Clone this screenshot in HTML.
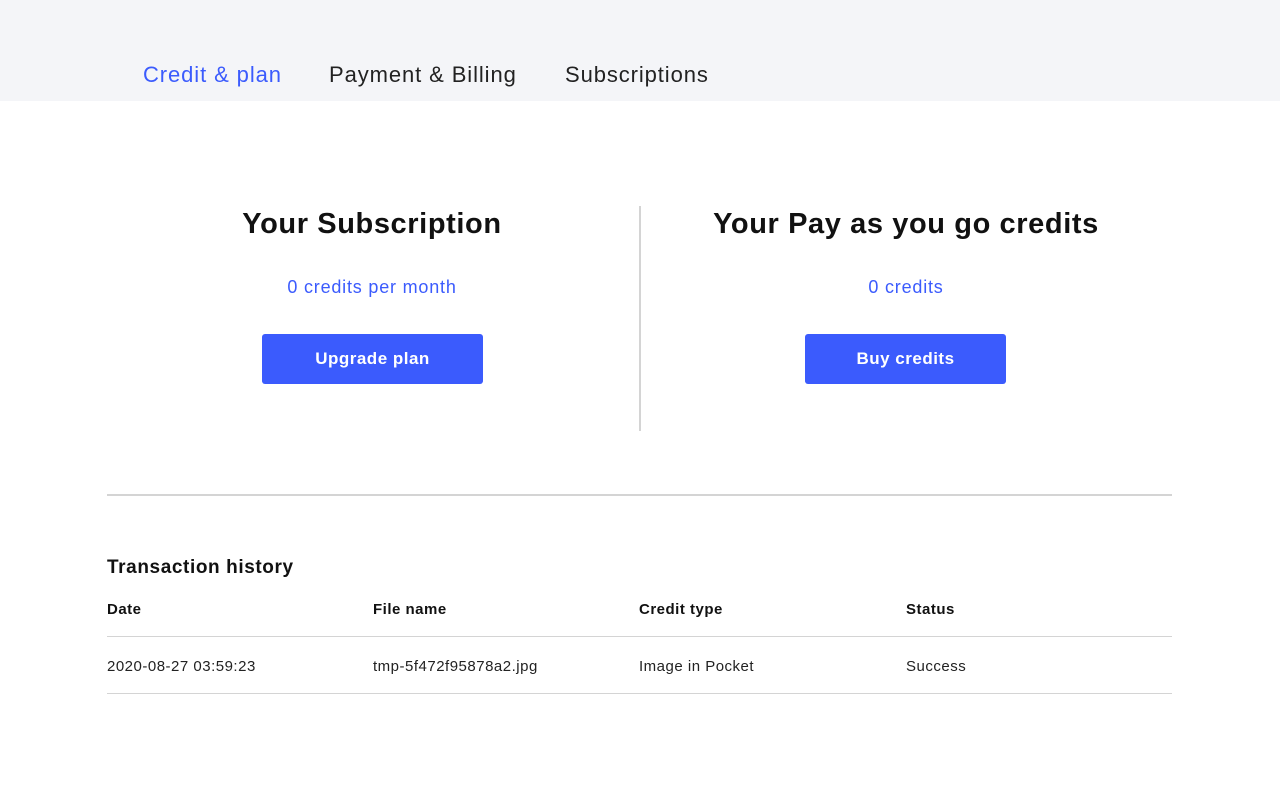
<!DOCTYPE html>
<html><head><meta charset="utf-8"><style>
*{margin:0;padding:0;box-sizing:border-box}
body{width:1280px;height:790px;background:#fff;font-family:"Liberation Sans",sans-serif;color:#111;position:relative;overflow:hidden}
.hdr{position:absolute;left:0;top:0;width:1280px;height:101px;background:#f4f5f8}
.tab{position:absolute;top:62px;font-size:22px;letter-spacing:0.9px;font-weight:500;color:#222;white-space:nowrap}
.a{position:absolute;white-space:nowrap}
.c{text-align:center}
h2{position:absolute;font-size:29px;letter-spacing:0.6px;font-weight:bold;text-align:center;white-space:nowrap}
.blue{color:#3b5bfd}
.btn{position:absolute;background:#3b5bfd;color:#fff;font-weight:bold;font-size:17px;letter-spacing:0.5px;border-radius:3px;display:flex;align-items:center;justify-content:center}
.line{position:absolute;background:#d4d4d4}
.th{position:absolute;top:601px;font-size:15px;letter-spacing:0.5px;font-weight:bold}
.td{position:absolute;top:658px;font-size:15px;letter-spacing:0.5px;color:#222}
</style></head><body>
<div class="hdr"></div>
<div class="tab" style="left:143px;color:#3b5bfd">Credit &amp; plan</div>
<div class="tab" style="left:329px">Payment &amp; Billing</div>
<div class="tab" style="left:565px">Subscriptions</div>

<h2 style="left:172px;width:400px;top:208px">Your Subscription</h2>
<div class="a c blue" style="left:172px;width:400px;top:277px;font-size:18px;letter-spacing:0.8px">0 credits per month</div>
<div class="btn" style="left:262px;top:334px;width:221px;height:50px">Upgrade plan</div>

<div class="line" style="left:639px;top:206px;width:2px;height:225px"></div>

<h2 style="left:656px;width:500px;top:208px">Your Pay as you go credits</h2>
<div class="a c blue" style="left:656px;width:500px;top:277px;font-size:18px;letter-spacing:0.8px">0 credits</div>
<div class="btn" style="left:805px;top:334px;width:201px;height:50px">Buy credits</div>

<div class="line" style="left:107px;top:494px;width:1065px;height:2px"></div>

<div class="a" style="left:107px;top:557px;font-size:19px;letter-spacing:0.6px;font-weight:bold">Transaction history</div>
<div class="th" style="left:107px">Date</div>
<div class="th" style="left:373px">File name</div>
<div class="th" style="left:639px">Credit type</div>
<div class="th" style="left:906px">Status</div>
<div class="line" style="left:107px;top:636px;width:1065px;height:1px"></div>
<div class="td" style="left:107px">2020-08-27 03:59:23</div>
<div class="td" style="left:373px">tmp-5f472f95878a2.jpg</div>
<div class="td" style="left:639px">Image in Pocket</div>
<div class="td" style="left:906px">Success</div>
<div class="line" style="left:107px;top:693px;width:1065px;height:1px"></div>
</body></html>
